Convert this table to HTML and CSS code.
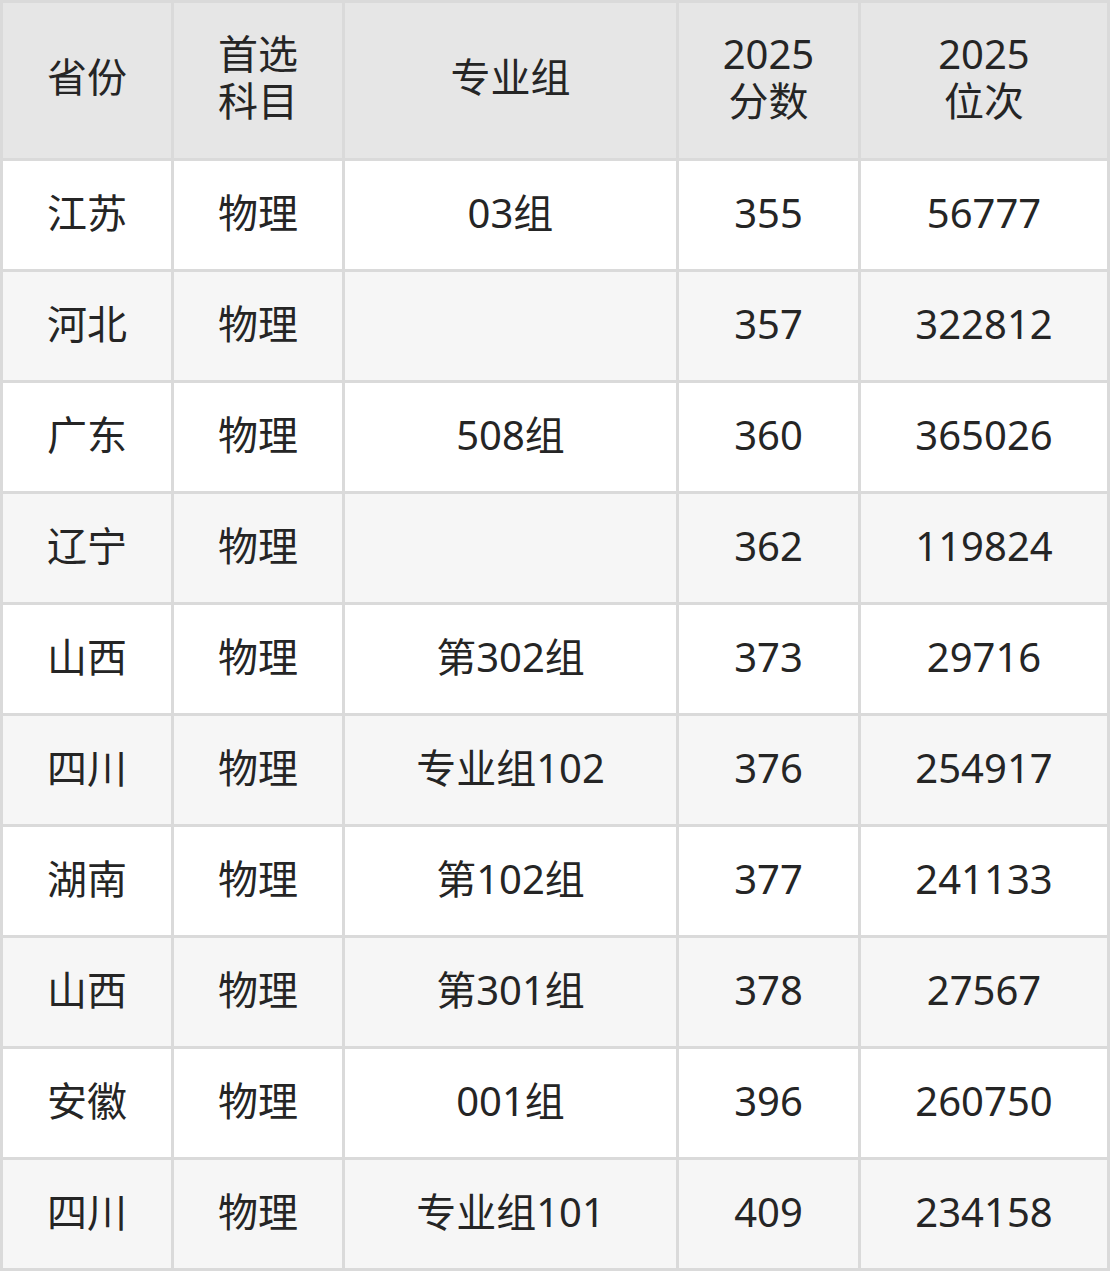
FILE: index.html
```html
<!DOCTYPE html>
<html lang="zh">
<head>
<meta charset="utf-8">
<link rel="stylesheet" href="styles.css">
</head>
<body>
<div class="table">
  <div class="cell head">省份</div>
  <div class="cell head"><span class="ln">首选</span><span class="ln">科目</span></div>
  <div class="cell head">专业组</div>
  <div class="cell head"><span class="ln">2025</span><span class="ln">分数</span></div>
  <div class="cell head"><span class="ln">2025</span><span class="ln">位次</span></div>

  <div class="cell">江苏</div><div class="cell">物理</div><div class="cell">03组</div><div class="cell">355</div><div class="cell">56777</div>
  <div class="cell alt">河北</div><div class="cell alt">物理</div><div class="cell alt"></div><div class="cell alt">357</div><div class="cell alt">322812</div>
  <div class="cell">广东</div><div class="cell">物理</div><div class="cell">508组</div><div class="cell">360</div><div class="cell">365026</div>
  <div class="cell alt">辽宁</div><div class="cell alt">物理</div><div class="cell alt"></div><div class="cell alt">362</div><div class="cell alt">119824</div>
  <div class="cell">山西</div><div class="cell">物理</div><div class="cell">第302组</div><div class="cell">373</div><div class="cell">29716</div>
  <div class="cell alt">四川</div><div class="cell alt">物理</div><div class="cell alt">专业组102</div><div class="cell alt">376</div><div class="cell alt">254917</div>
  <div class="cell">湖南</div><div class="cell">物理</div><div class="cell">第102组</div><div class="cell">377</div><div class="cell">241133</div>
  <div class="cell alt">山西</div><div class="cell alt">物理</div><div class="cell alt">第301组</div><div class="cell alt">378</div><div class="cell alt">27567</div>
  <div class="cell">安徽</div><div class="cell">物理</div><div class="cell">001组</div><div class="cell">396</div><div class="cell">260750</div>
  <div class="cell alt">四川</div><div class="cell alt">物理</div><div class="cell alt">专业组101</div><div class="cell alt">409</div><div class="cell alt">234158</div>
</div>
</body>
</html>
```
FILE: styles.css
```css
html, body {
  margin: 0;
  padding: 0;
  background: #ffffff;
}
.table {
  width: 1110px;
  box-sizing: border-box;
  display: grid;
  grid-template-columns: 168px 168px 331px 179px 246px;
  grid-template-rows: 155px repeat(10, 108px);
  gap: 3px;
  padding: 3px;
  background: #dadada;
  font-family: "Noto Sans", "Noto Sans CJK SC", sans-serif;
  font-size: 40px;
  color: #252525;
}
.cell {
  background: #ffffff;
  display: flex;
  flex-direction: column;
  align-items: center;
  justify-content: center;
  text-align: center;
  line-height: 47px;
  padding-bottom: 6px;
  box-sizing: border-box;
}
.ln {
  display: block;
  height: 47px;
  overflow: visible;
}
.cell.alt {
  background: #f6f6f6;
}
.cell.head {
  background: #e6e6e6;
  padding-bottom: 8px;
}
```
